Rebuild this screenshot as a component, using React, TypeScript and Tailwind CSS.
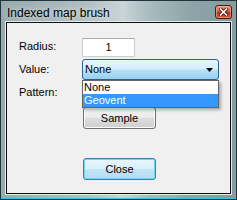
import React from "react";

export default function App() {
  return (
    <div
      className="w-[237px] h-[200px] box-border border border-[#24343a] flex flex-col overflow-hidden shadow-[inset_-1px_-1px_0_#33c3e3] bg-[linear-gradient(90deg,#97abaf_0%,#aebec1_35%,#c9d5d7_52%,#aabdbf_62%,#8ea6a9_80%,#829b9f_100%)] px-[4px] pb-[4px]"
      style={{ fontFamily: '"Liberation Sans", Arial, sans-serif' }}
    >
      {/* Title bar */}
      <div className="h-[20px] flex items-start shrink-0">
        <div className="ml-[2px] mt-[5px] text-[12px] leading-[14px] text-black [text-shadow:0_0_6px_rgba(255,255,255,0.9)]">
          Indexed map brush
        </div>
        <div className="ml-auto mt-[4px] w-[17px] h-[14px] rounded-[3px] border border-[#4a1a10] bg-[linear-gradient(180deg,#eb9580_0%,#d55e40_45%,#b8341a_55%,#d65a36_100%)] shadow-[inset_0_0_0_1px_rgba(255,200,180,0.45)] flex items-center justify-center">
          <svg width="9" height="8" viewBox="0 0 9 8">
            <path d="M1.5 1 L7.5 7 M7.5 1 L1.5 7" stroke="#3a1008" strokeWidth="3.2" strokeLinecap="square" />
            <path d="M1.5 1 L7.5 7 M7.5 1 L1.5 7" stroke="#ffffff" strokeWidth="1.6" strokeLinecap="square" />
          </svg>
        </div>
      </div>

      {/* Client area */}
      <div className="flex-1 border border-[#e4ebec]">
        <div className="h-full border border-[#101010] bg-[#f0f0f0] relative text-[11px] leading-[13px] text-black">
          <div className="flex flex-col pl-[12px]">
            {/* Radius */}
            <div className="mt-[15px] h-[19px] flex items-center">
              <div className="w-[63px] -mt-[2px]">Radius:</div>
              <div className="w-[53px] h-[19px] box-border border border-[#c9cfd6] border-t-[#abadb3] bg-white flex items-center justify-center">
                1
              </div>
            </div>
            {/* Value */}
            <div className="mt-[2px] h-[21px] flex items-center">
              <div className="w-[63px]">Value:</div>
              <div className="w-[137px] h-[21px] box-border rounded-[3px] border border-[#2c628b] bg-[linear-gradient(180deg,#e8f5fc_0%,#d6eefb_45%,#b6e0f6_55%,#98cfee_100%)] flex items-center pl-[2px] pr-[5px]">
                <span>None</span>
                <svg className="ml-auto" width="7" height="4" viewBox="0 0 7 4">
                  <path d="M0 0 H7 L3.5 4 Z" fill="#000" />
                </svg>
              </div>
            </div>
            {/* Pattern */}
            <div className="mt-[2px] h-[21px] flex items-center">
              <div className="w-[63px]">Pattern:</div>
            </div>
            {/* Sample */}
            <div className="mt-[4px] flex">
              <div className="ml-[64px] w-[73px] h-[22px] box-border rounded-[3px] border border-[#707070] bg-[linear-gradient(180deg,#f2f2f2_0%,#ebebeb_50%,#dddddd_50%,#cfcfcf_100%)] shadow-[inset_0_0_0_1px_#fcfcfc] flex items-center justify-center">
                Sample
              </div>
            </div>
            {/* Close */}
            <div className="mt-[29px] flex">
              <div className="ml-[64px] w-[73px] h-[22px] box-border rounded-[3px] border border-[#3c7fb1] bg-[linear-gradient(180deg,#eaf6fd_0%,#d9f0fc_50%,#c2e4f6_50%,#b5dcf0_100%)] shadow-[inset_0_0_0_1px_#6fd6f6] flex items-center justify-center">
                Close
              </div>
            </div>
          </div>

          {/* Dropdown list overlay */}
          <div className="absolute left-[75px] top-[57px] w-[137px] h-[28px] box-border border border-[#646464] bg-white shadow-[2px_2px_3px_rgba(0,0,0,0.3)] flex flex-col">
            <div className="h-[13px] pl-[1px] leading-[13px]">None</div>
            <div className="h-[13px] pl-[1px] leading-[13px] bg-[#3399ff] text-white">Geovent</div>
          </div>
        </div>
      </div>
    </div>
  );
}
